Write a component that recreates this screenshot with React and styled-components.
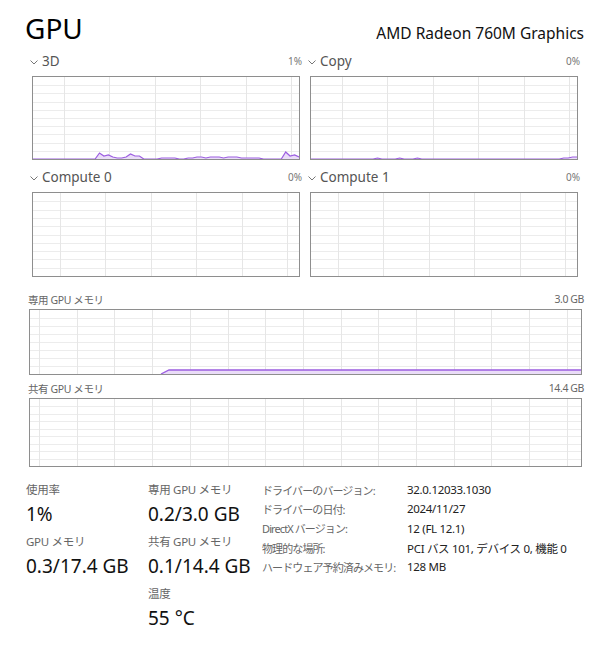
import React from 'react';
import styled, { createGlobalStyle } from 'styled-components';

const GlobalStyle = createGlobalStyle`
  body {
    margin: 0;
    background: #fff;
    font-family: "Noto Sans", "Noto Sans CJK JP", sans-serif;
  }
`;

const LATIN = `"Noto Sans", "Noto Sans CJK JP", sans-serif`;

// 61 samples, bump heights in px above the graph floor
const threeD = [0,0,0,0,0,0,0,0,0,0,0,0,0,0,0,6,3,4,2,1,1,2,5,3,3,0,0,0,0,1,1,1,1,0,0,1,1,2,2,1,2,2,2,1,2,2,2,1,1,1,1,1,0,0,0,0,0,7,3,4,2];
const copy = [0,0,0,0,0,0,0,0,0,0,0,0,0,0,0,1,0,0,0,0,1,0,0,0,1,0,0,0,0,0,0,0,0,0,0,0,0,0,0,0,0,0,0,0,0,0,0,0,0,0,0,0,0,0,0,0,0,1,1,2,2];
const flat = new Array(61).fill(0);

class Graph extends React.Component {
  render() {
    const { w, h, rows, offset, data, step } = this.props;
    const vlines = [];
    for (let x = offset; x < w; x += step) vlines.push(Math.round(x) + 0.5);
    const hlines = [];
    for (let i = 1; i < rows; i++) hlines.push(Math.round((h / rows) * i) + 0.5);

    let line = null;
    if (data && data.some(v => v > 0)) {
      const dx = w / (data.length - 1);
      const d = data.map((v, i) => `${i ? 'L' : 'M'}${(i * dx).toFixed(1)},${h - v}`).join(' ');
      line = (
        <g>
          <path d={`${d} L${w},${h} L0,${h} Z`} fill="#eadcf8" />
          <path d={d} fill="none" stroke="#9c5ee0" strokeWidth="1.2" />
        </g>
      );
    }

    return (
      <GraphBox style={{ width: w, height: h }}>
        <svg width={w} height={h} viewBox={`0 0 ${w} ${h}`}>
          {hlines.map(y => <line key={'h' + y} x1="0" x2={w} y1={y} y2={y} stroke="#ececec" />)}
          {vlines.map(x => <line key={'v' + x} x1={x} x2={x} y1="0" y2={h} stroke="#e6e6e6" />)}
          {line}
          {this.props.children}
        </svg>
      </GraphBox>
    );
  }
}

const Chevron = () => (
  <ChevronIcon width="8" height="5" viewBox="0 0 8 5">
    <path d="M0.5,0.5 L4,4 L7.5,0.5" fill="none" stroke="#777" strokeWidth="1" />
  </ChevronIcon>
);

class App extends React.Component {
  render() {
    return (
      <Page>
        <GlobalStyle />
        <Header>
          <Title>GPU</Title>
          <Model>AMD Radeon 760M Graphics</Model>
        </Header>

        <EngineGrid>
          <Engine>
            <EngineHead><Label><Chevron />3D</Label><Pct>1%</Pct></EngineHead>
            <Graph w={266} h={82} rows={10} offset={31} step={45.4} data={threeD} />
          </Engine>
          <Engine>
            <EngineHead><Label><Chevron />Copy</Label><Pct>0%</Pct></EngineHead>
            <Graph w={266} h={82} rows={10} offset={31} step={45.4} data={copy} />
          </Engine>
          <Engine>
            <EngineHead><Label><Chevron />Compute 0</Label><Pct>0%</Pct></EngineHead>
            <Graph w={266} h={83} rows={10} offset={27} step={45.4} data={flat} />
          </Engine>
          <Engine>
            <EngineHead><Label><Chevron />Compute 1</Label><Pct>0%</Pct></EngineHead>
            <Graph w={266} h={83} rows={10} offset={27} step={45.4} data={flat} />
          </Engine>
        </EngineGrid>

        <MemBlock $top={13}>
          <MemHead><MemLabel>専用 GPU メモリ</MemLabel><MemLabel>3.0 GB</MemLabel></MemHead>
          <Graph w={551} h={64} rows={8} offset={9} step={37.7}>
            <path d="M131,64 L139,60 L551,60 L551,64 Z" fill="#eadcf8" />
            <path d="M131,64 L139,60 L551,60" fill="none" stroke="#9c5ee0" strokeWidth="1.3" />
          </Graph>
        </MemBlock>

        <MemBlock $top={4}>
          <MemHead><MemLabel>共有 GPU メモリ</MemLabel><MemLabel>14.4 GB</MemLabel></MemHead>
          <Graph w={551} h={67} rows={9} offset={9} step={37.7} />
        </MemBlock>

        <Stats>
          <StatCol>
            <Stat><StatLabel>使用率</StatLabel><StatValue>1%</StatValue></Stat>
            <Stat><StatLabel>GPU メモリ</StatLabel><StatValue>0.3/17.4 GB</StatValue></Stat>
          </StatCol>
          <StatCol>
            <Stat><StatLabel>専用 GPU メモリ</StatLabel><StatValue>0.2/3.0 GB</StatValue></Stat>
            <Stat><StatLabel>共有 GPU メモリ</StatLabel><StatValue>0.1/14.4 GB</StatValue></Stat>
            <Stat><StatLabel>温度</StatLabel><StatValue>55 °C</StatValue></Stat>
          </StatCol>
          <InfoTable>
            <InfoKey>ドライバーのバージョン:</InfoKey><InfoVal>32.0.12033.1030</InfoVal>
            <InfoKey>ドライバーの日付:</InfoKey><InfoVal>2024/11/27</InfoVal>
            <InfoKey>DirectX バージョン:</InfoKey><InfoVal>12 (FL 12.1)</InfoVal>
            <InfoKey>物理的な場所:</InfoKey><InfoVal>PCI バス 101, デバイス 0, 機能 0</InfoVal>
            <InfoKey>ハードウェア予約済みメモリ:</InfoKey><InfoVal>128 MB</InfoVal>
          </InfoTable>
        </Stats>
      </Page>
    );
  }
}

export default App;

const Page = styled.div`
  width: 600px;
  height: 653px;
  box-sizing: border-box;
  padding: 6px 16px 0 26px;
  font-family: ${LATIN};
  color: #000;
`;

const Header = styled.div`
  display: flex;
  justify-content: space-between;
  align-items: flex-end;
  height: 40px;
`;

const Title = styled.div`
  font-size: 28px;
  line-height: 36px;
  font-weight: 400;
  margin-left: -1px;
`;

const Model = styled.div`
  font-size: 15.5px;
  line-height: 22px;
  margin-bottom: 2px;
  color: #111;
`;

const EngineGrid = styled.div`
  display: grid;
  grid-template-columns: 276px 276px;
  column-gap: 2px;
  row-gap: 8px;
  margin-top: 6px;
`;

const Engine = styled.div`
  display: flex;
  flex-direction: column;
`;

const EngineHead = styled.div`
  display: flex;
  justify-content: space-between;
  align-items: center;
  height: 18px;
  padding-left: 4px;
  margin-bottom: 6px;
`;

const Label = styled.div`
  display: flex;
  align-items: center;
  font-size: 13.5px;
  color: #555;
`;

const ChevronIcon = styled.svg`
  display: block;
  margin-right: 4px;
  margin-top: 2px;
`;

const Pct = styled.div`
  font-size: 10px;
  color: #777;
`;

const GraphBox = styled.div`
  border: 1px solid #8e8e8e;
  margin-left: 6px;
  background: #fff;
  line-height: 0;
  svg { display: block; }
`;

const MemBlock = styled.div`
  display: flex;
  flex-direction: column;
  margin-top: ${p => p.$top}px;
  ${GraphBox} { margin-left: 3px; }
`;

const MemHead = styled.div`
  display: flex;
  justify-content: space-between;
  align-items: center;
  height: 18px;
  padding-left: 2px;
  margin-bottom: 1px;
`;

const MemLabel = styled.div`
  font-size: 10.5px;
  color: #666;
  letter-spacing: -0.4px;
`;

const Stats = styled.div`
  display: flex;
  margin-top: 13px;
`;

const StatCol = styled.div`
  display: flex;
  flex-direction: column;
  gap: 3px;
  width: 122px;
`;

const Stat = styled.div`
  display: flex;
  flex-direction: column;
`;

const StatLabel = styled.div`
  font-size: 11.5px;
  color: #666;
  line-height: 20px;
  letter-spacing: -0.3px;
`;

const StatValue = styled.div`
  font-size: 19px;
  line-height: 29px;
  color: #111;
`;

const InfoTable = styled.div`
  display: grid;
  grid-template-columns: 145px auto;
  grid-auto-rows: 19.3px;
  align-items: center;
  margin-left: -8px;
`;

const InfoKey = styled.div`
  font-size: 11px;
  color: #666;
  white-space: nowrap;
  letter-spacing: -0.9px;
`;

const InfoVal = styled.div`
  font-size: 11.5px;
  color: #222;
  white-space: nowrap;
  letter-spacing: -0.3px;
`;
